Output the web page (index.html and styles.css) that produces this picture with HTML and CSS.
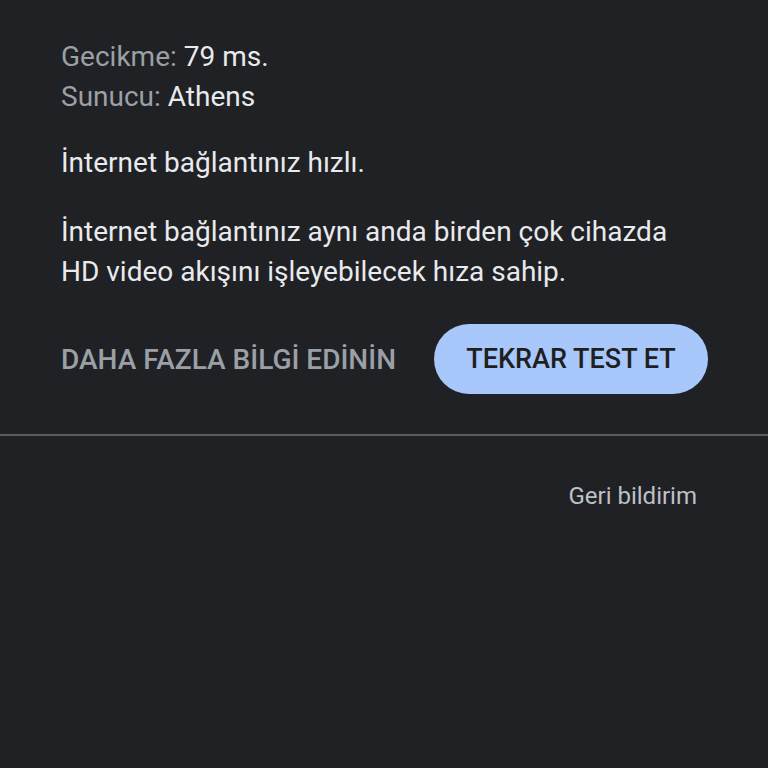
FILE: index.html
```html
<!DOCTYPE html>
<html lang="tr">
<head>
    <meta charset="UTF-8">
    <meta name="viewport" content="width=device-width, initial-scale=1.0">
    <title>Hız testi</title>
    <link rel="stylesheet" href="styles.css">
</head>
<body>
    <div class="result">
        <div class="stats">
            <p><span class="label">Gecikme:</span> 79 ms.</p>
            <p><span class="label">Sunucu:</span> Athens</p>
        </div>
        <p class="summary">İnternet bağlantınız hızlı.</p>
        <p class="detail">İnternet bağlantınız aynı anda birden çok cihazda HD video akışını işleyebilecek hıza sahip.</p>
        <div class="actions">
            <a class="more">DAHA FAZLA BİLGİ EDİNİN</a>
            <button class="retry">TEKRAR TEST ET</button>
        </div>
    </div>
    <div class="footer">
        <a class="feedback">Geri bildirim</a>
    </div>
</body>
</html>
```

FILE: styles.css
```css
body {
    font-family: Roboto, "Noto Sans", sans-serif;
    background: #202124;
    color: #e8eaed;
    margin: 0;
    padding: 0;
    height: 100vh;
}
.result {
    padding: 37px 60px 40px 61px;
    border-bottom: 2px solid #5a5c60;
}
p {
    margin: 0;
}
.stats p {
    font-size: 28px;
    line-height: 40px;
}
.label {
    color: #9aa0a6;
}
.summary {
    font-size: 28px;
    line-height: 40px;
    margin-top: 26px;
}
.detail {
    font-size: 28px;
    line-height: 40px;
    margin-top: 29px;
    max-width: 620px;
}
.actions {
    display: flex;
    justify-content: space-between;
    align-items: center;
    margin-top: 32px;
}
.more {
    font-size: 28px;
    font-weight: 500;
    color: #9aa0a6;
}
.retry {
    background: #a8c7fa;
    color: #1f1f1f;
    border: none;
    border-radius: 36px;
    font-family: inherit;
    font-size: 27px;
    font-weight: 500;
    width: 274px;
    height: 70px;
}
.footer {
    display: flex;
    justify-content: flex-end;
    padding: 46px 71px 0 0;
}
.feedback {
    font-size: 24px;
    color: #bdc1c6;
}
```
